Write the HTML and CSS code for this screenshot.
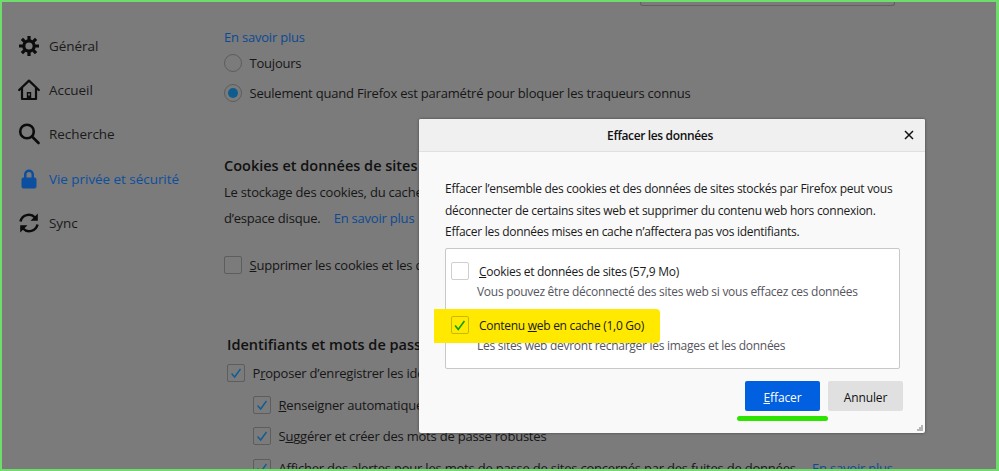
FILE: index.html
```html
<!DOCTYPE html>
<html lang="fr">
<head>
<meta charset="utf-8">
<title>Effacer les données</title>
<link rel="stylesheet" href="styles.css">
</head>
<body>
<div class="frame">
  <nav class="sidebar">
    <a class="nav-item">
      <svg class="nav-icon" viewBox="0 0 22 22"><g fill="none" stroke="#0c0c0d"><circle cx="11" cy="11" r="5.2" stroke-width="3.2"/><path stroke-width="3.2" d="M11 1v4M11 17v4M1 11h4M17 11h4M3.9 3.9l2.8 2.8M15.3 15.3l2.8 2.8M3.9 18.1l2.8-2.8M15.3 6.7l2.8-2.8"/></g></svg>
      <span>Général</span>
    </a>
    <a class="nav-item">
      <svg class="nav-icon" viewBox="0 0 22 22"><path fill="none" stroke="#0c0c0d" stroke-width="2.2" stroke-linejoin="round" stroke-linecap="round" d="M1.2 11 11 1.6 20.8 11M4 9v11h14V9"/><path fill="#0c0c0d" d="M8.8 13h4.4v7H8.800z"/><path fill="#7b7b7b" d="M10.200 14.500h1.600v2h-1.600z"/></svg>
      <span>Accueil</span>
    </a>
    <a class="nav-item">
      <svg class="nav-icon" viewBox="0 0 22 22"><g fill="none" stroke="#0c0c0d" stroke-width="2.600"><circle cx="9" cy="8.500" r="6.800"/><path stroke-linecap="round" d="m14 13.500 6.500 6.500"/></g></svg>
      <span>Recherche</span>
    </a>
    <a class="nav-item is-active">
      <svg class="nav-icon" viewBox="0 0 22 22"><path fill="#0c4f9e" d="M6 9.500V6.600a5 5 0 0 1 10 0v2.900h.6c1 0 1.900.9 1.900 1.900v7.200c0 1-.9 1.900-1.900 1.900H5.400c-1 0-1.900-.9-1.900-1.900v-7.200c0-1 .9-1.900 1.900-1.900zm2.500 0h5V6.600a2.500 2.500 0 0 0-5 0z"/></svg>
      <span>Vie privée et sécurité</span>
    </a>
    <a class="nav-item">
      <svg class="nav-icon" viewBox="0 0 22 22"><g fill="none" stroke="#0c0c0d" stroke-width="2.500"><path d="M2.500 9.500A8.500 8.500 0 0 1 17 5.500"/><path d="M19.500 12.500A8.500 8.500 0 0 1 5 16.500"/></g><path fill="#0c0c0d" d="M19.800 1.500v7.300h-7.300zM2.200 20.500v-7.300h7.300z"/></svg>
      <span>Sync</span>
    </a>
  </nav>

  <main class="main">
    <div class="topbar"><div class="search-field"></div></div>
    <div class="scroll">
      <a class="link first-link">En savoir plus</a>
      <div class="row row-radio row-radio-first"><span class="radio"></span><span>Toujours</span></div>
      <div class="row row-radio"><span class="radio is-checked"></span><span>Seulement quand Firefox est paramétré pour bloquer les traqueurs connus</span></div>

      <h2 class="heading heading-cookies">Cookies et données de sites</h2>
      <p class="para para-a">Le stockage des cookies, du cache</p>
      <p class="para para-b">d’espace disque. <a class="link link-gap">En savoir plus</a></p>
      <div class="row row-delete"><span class="check"></span><span><u>S</u>upprimer les cookies et les données</span></div>

      <div class="logins">
        <h2 class="heading">Identifiants et mots de passe</h2>
        <div class="row row-login"><span class="check is-checked"><svg viewBox="0 0 18 18"><path class="tick" d="m4 9.500 3.500 4L14 4.500"/></svg></span><span>P<u>r</u>oposer d’enregistrer les identifiants</span></div>
        <div class="row row-sub"><span class="check is-checked"><svg viewBox="0 0 18 18"><path class="tick" d="m4 9.500 3.500 4L14 4.500"/></svg></span><span><u>R</u>enseigner automatiquement</span></div>
        <div class="row row-sub"><span class="check is-checked"><svg viewBox="0 0 18 18"><path class="tick" d="m4 9.500 3.500 4L14 4.500"/></svg></span><span>S<u>u</u>ggérer et créer des mots de passe robustes</span></div>
        <div class="row row-sub"><span class="check is-checked"><svg viewBox="0 0 18 18"><path class="tick" d="m4 9.500 3.500 4L14 4.500"/></svg></span><span>Afficher des alertes pour les mots de passe de sites concernés par des fuites de données. <a class="link link-gap">En savoir plus</a></span></div>
      </div>
    </div>
  </main>

  <section class="dialog">
    <header class="dialog-head">
      <h1 class="dialog-title">Effacer les données</h1>
      <svg class="close" viewBox="0 0 10 10"><path d="m1 1 8 8M9 1 1 9"/></svg>
    </header>
    <div class="dialog-body">
      <p class="intro">Effacer l’ensemble des cookies et des données de sites stockés par Firefox peut vous<br>déconnecter de certains sites web et supprimer du contenu web hors connexion.<br>Effacer les données mises en cache n’affectera pas vos identifiants.</p>
      <div class="options">
        <div class="option">
          <div class="option-line"><span class="check light"></span><span class="option-label"><u>C</u>ookies et données de sites (57,9 Mo)</span></div>
          <div class="option-note">Vous pouvez être déconnecté des sites web si vous effacez ces données</div>
        </div>
        <div class="option option-second">
          <div class="option-line marked">
            <span class="check light on-mark"><svg viewBox="0 0 18 18"><path class="tick green" d="m3.500 9.500 3.500 4.500 7-9.500"/></svg></span>
            <span class="option-label">Contenu <u>w</u>eb en cache (1,0 Go)</span>
          </div>
          <div class="option-note">Les sites web devront recharger les images et les données</div>
        </div>
      </div>
      <div class="actions">
        <button class="btn btn-primary"><u>E</u>ffacer</button>
        <button class="btn">Annuler</button>
      </div>
    </div>
    <svg class="grip" viewBox="0 0 6 6"><path d="M4 0h2v2H4zM2 2h2v2H2zM4 2h2v2H4zM0 4h2v2H0zM2 4h2v2H2zM4 4h2v2H4z"/></svg>
  </section>
  <div class="green-mark"></div>
</div>
</body>
</html>
```

FILE: styles.css
```css
* { box-sizing: border-box; }
html, body { margin: 0; padding: 0; }
body { font-family: "Open Sans", "Noto Sans", sans-serif; font-size: 13px; color: #161616; background: #7b7b7b; }

.frame {
  position: relative;
  display: flex;
  width: 999px;
  height: 471px;
  overflow: hidden;
  background: #7b7b7b;
  border: solid #6fdc6c;
  border-width: 2px 3px 2px 2px;
}

.sidebar { flex: 0 0 222px; padding: 22px 0 0 16px; }
.nav-item { display: flex; align-items: center; gap: 9px; height: 44.200px; font-size: 13.500px; letter-spacing: -.05px; color: #1a1a1a; }
.nav-item.is-active { color: #0c4f9e; }
.nav-icon { width: 22px; height: 22px; flex: none; }

.main { flex: 1; min-width: 0; display: flex; flex-direction: column; letter-spacing: -.21px; }
.topbar { height: 31px; display: flex; justify-content: flex-end; flex: none; padding-right: 101px; }
.search-field { width: 255px; height: 4px; border: 1px solid #5f5f5f; border-top: 0; border-radius: 0 0 3px 3px; }
.scroll { flex: 1; overflow: hidden; }

.link { color: #0c4a94; }
.first-link { display: block; line-height: 18px; margin-top: -5px; }
.link-gap { margin-left: 10px; }

.row { display: flex; align-items: center; gap: 7.500px; height: 18px; white-space: nowrap; }
.row-radio { margin-top: 12px; }
.row-radio-first { margin-top: 8px; }
.radio { width: 18px; height: 18px; flex: none; border-radius: 50%; border: 1px solid #5d5d5d; display: flex; align-items: center; justify-content: center; }
.radio.is-checked::after { content: ""; width: 10px; height: 10px; border-radius: 50%; background: #0f5d8f; }

.check { width: 18px; height: 18px; flex: none; border: 1px solid #5d5d5d; border-radius: 2px; display: block; }
.check svg { display: block; width: 16px; height: 16px; }
.tick { fill: none; stroke: #0f5d96; stroke-width: 1.600; }
.tick.green { stroke: #0f9d0a; stroke-width: 1.800; }
.check.light { border-color: #cfcfcf; background: #fff; }
.check.on-mark { border-color: #c9b800; background: #ffe900; }

.heading { margin: 0; font-size: 14.500px; font-weight: 600; line-height: 20px; letter-spacing: 0; color: #111; white-space: nowrap; }
.heading-cookies { margin-top: 54px; }
.para { margin: 0; line-height: 20px; white-space: nowrap; }
.para-a { margin-top: 6px; }
.para-b { margin-top: 6px; }
.row-delete { margin-top: 28px; }

.logins { margin: 61px 0 0 3px; }
.row-login { margin-top: 9px; }
.row-sub { margin: 13.500px 0 0 26px; }

.dialog {
  position: absolute;
  left: 417px;
  top: 117px;
  width: 506px;
  height: 314px;
  background: #f9f9f9;
  border-radius: 2px;
  box-shadow: 0 0 3px rgba(0,0,0,.45);
  display: flex;
  flex-direction: column;
}
.dialog-head { flex: none; height: 33px; display: flex; align-items: center; justify-content: center; padding-right: 24px; background: #f0f0f0; border-bottom: 1px solid #e0e0e0; border-radius: 2px 2px 0 0; position: relative; }
.dialog-title { margin: 0; font-size: 12px; font-weight: 600; letter-spacing: -.35px; color: #111; }
.close { position: absolute; right: 11px; top: 11px; width: 10px; height: 10px; fill: none; stroke: #111; stroke-width: 1.500; }
.dialog-body { flex: 1; padding: 26px 22px 0 26px; letter-spacing: -.28px; }
.intro { margin: 0; font-size: 12px; line-height: 21.500px; color: #1a1a1a; white-space: nowrap; }
.options { height: 121px; margin-top: 5px; width: 455px; background: #fff; border: 1px solid #c8c8c8; border-radius: 2px; padding: 13px 0 0 5px; }
.option-line { display: flex; align-items: center; gap: 10px; height: 18px; font-size: 12px; color: #1a1a1a; white-space: nowrap; }
.option-label { padding-top: 2px; }
.option-note { margin: 3px 0 0 26px; line-height: 18px; font-size: 12px; color: #55555e; white-space: nowrap; }
.option-second { margin-top: 15px; }
.marked { position: relative; z-index: 0; }
.marked::before { content: ""; position: absolute; z-index: -1; left: -17px; top: -7px; width: 226px; height: 34px; background: #ffe900; border-radius: 0 4px 4px 0; }
.actions { display: flex; justify-content: flex-end; gap: 8px; margin-top: 12px; }
.btn { width: 75px; height: 30px; border: 0; border-radius: 2px; background: #e0e0e1; color: #111; font: 12px "Open Sans", "Noto Sans", sans-serif; letter-spacing: -.1px; padding: 3px 0 0; }
.btn-primary { background: #0060df; color: #fff; }
.grip { position: absolute; right: 2px; bottom: 2px; width: 6px; height: 6px; fill: #b5b5b5; }
.green-mark { position: absolute; left: 735px; top: 414px; width: 91px; height: 5px; border-radius: 3px; background: #2ce400; }
```
